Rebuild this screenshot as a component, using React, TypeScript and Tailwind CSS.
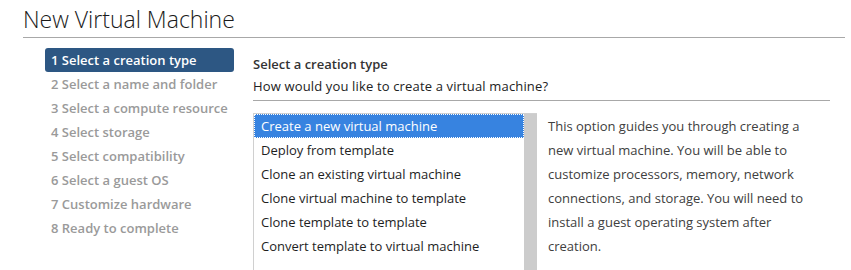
const steps = [
  '1 Select a creation type',
  '2 Select a name and folder',
  '3 Select a compute resource',
  '4 Select storage',
  '5 Select compatibility',
  '6 Select a guest OS',
  '7 Customize hardware',
  '8 Ready to complete',
]

const options = [
  'Create a new virtual machine',
  'Deploy from template',
  'Clone an existing virtual machine',
  'Clone virtual machine to template',
  'Clone template to template',
  'Convert template to virtual machine',
]

export default function App() {
  const selected = 0
  return (
    <div className="w-[851px] h-[270px] overflow-hidden bg-white text-[#313131] font-['Open_Sans',sans-serif]">
      {/* header */}
      <div className="ml-[23px] mr-[6px] border-b border-[#a8a8a8] h-[39px]">
        <h1 className="text-[23px] leading-[40px] -mt-[1px] font-light text-[#1a1a1a]">New Virtual Machine</h1>
      </div>

      <div className="flex pt-[10px]">
        {/* steps */}
        <div className="ml-[45px] w-[189px] flex flex-col">
          {steps.map((s, i) => (
            <div
              key={s}
              className={`h-[24px] px-[6px] text-[13px] leading-[24px] font-semibold whitespace-nowrap rounded-[3px] ${
                i === 0 ? 'bg-[#2d5783] text-white' : 'text-[#9a9a9a]'
              }`}
            >
              {s}
            </div>
          ))}
        </div>

        {/* content */}
        <div className="ml-[19px] w-[577px]">
          <div className="text-[13px] font-semibold leading-[18px] text-[#333] mt-[7px]">Select a creation type</div>
          <div className="text-[13px] leading-[18px] text-[#222] mt-[4px] tracking-[0.15px]">
            How would you like to create a virtual machine?
          </div>
          <div className="border-b border-[#a8a8a8] mt-[5px]" />

          <div className="flex mt-[12px]">
            <div className="w-[284px] h-[160px] border-t border-l border-[#d0d0d0] flex">
              <div className="w-[270px] flex flex-col">
                {options.map((o, i) => (
                  <div
                    key={o}
                    className={`h-[24px] px-[6px] text-[13px] leading-[23px] whitespace-nowrap border border-dotted ${
                      i === selected ? 'bg-[#3783e0] text-white border-[#ffffff]' : 'border-transparent text-[#1e1e1e]'
                    }`}
                  >
                    {o}
                  </div>
                ))}
              </div>
              <div className="w-[13px] bg-[#cccccc]" />
            </div>
            <p className="ml-[11px] mt-[1px] w-[270px] text-[13px] leading-[24px] text-[#404040]">
              This option guides you through creating a new virtual machine. You will be able to customize processors,
              memory, network connections, and storage. You will need to install a guest operating system after
              creation.
            </p>
          </div>
        </div>
      </div>
    </div>
  )
}
